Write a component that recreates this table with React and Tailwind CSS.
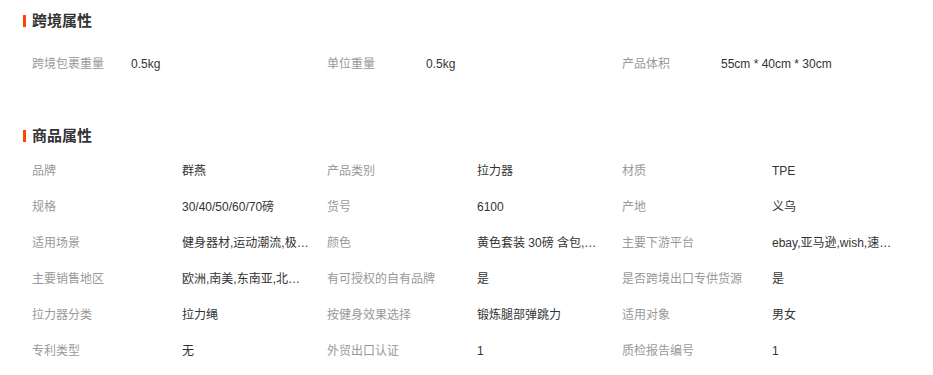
const font = { fontFamily: '"Liberation Sans", "Noto Sans CJK SC", sans-serif' };

const crossBorder = [
  ["跨境包裹重量", "0.5kg"],
  ["单位重量", "0.5kg"],
  ["产品体积", "55cm * 40cm * 30cm"],
];

const goods = [
  ["品牌", "群燕"],
  ["产品类别", "拉力器"],
  ["材质", "TPE"],
  ["规格", "30/40/50/60/70磅"],
  ["货号", "6100"],
  ["产地", "义乌"],
  ["适用场景", "健身器材,运动潮流,极限运动"],
  ["颜色", "黄色套装 30磅 含包,红色套装 40磅 含包"],
  ["主要下游平台", "ebay,亚马逊,wish,速卖通"],
  ["主要销售地区", "欧洲,南美,东南亚,北美,东北亚,中东"],
  ["有可授权的自有品牌", "是"],
  ["是否跨境出口专供货源", "是"],
  ["拉力器分类", "拉力绳"],
  ["按健身效果选择", "锻炼腿部弹跳力"],
  ["适用对象", "男女"],
  ["专利类型", "无"],
  ["外贸出口认证", "1"],
  ["质检报告编号", "1"],
];

function Title({ children }) {
  return (
    <div className="flex h-[22px] items-center gap-[6px] pl-[23px]">
      <span className="h-[12px] w-[3px] bg-[#ff4400]" />
      <span className="text-[15px] font-bold text-[#333]">{children}</span>
    </div>
  );
}

export default function App() {
  return (
    <div className="h-[375px] w-[933px] bg-white text-[12px]" style={font}>
      <div className="pt-[10px]">
        <Title>跨境属性</Title>
      </div>
      <div className="mt-[14px] grid grid-cols-[295px_295px_295px] pl-[32px]">
        {crossBorder.map(([k, v]) => (
          <div key={k} className="flex h-[36px] items-center">
            <span className="w-[99px] shrink-0 text-[#999]">{k}</span>
            <span className="text-[#333]">{v}</span>
          </div>
        ))}
      </div>
      <div className="mt-[43px]">
        <Title>商品属性</Title>
      </div>
      <div className="mt-[6px] grid grid-cols-[295px_295px_295px] pl-[32px]">
        {goods.map(([k, v]) => (
          <div key={k} className="flex h-[36px] items-center">
            <span className="w-[150px] shrink-0 whitespace-nowrap text-[#999]">{k}</span>
            <span className="w-[128px] truncate text-[#333]">{v}</span>
          </div>
        ))}
      </div>
    </div>
  );
}
